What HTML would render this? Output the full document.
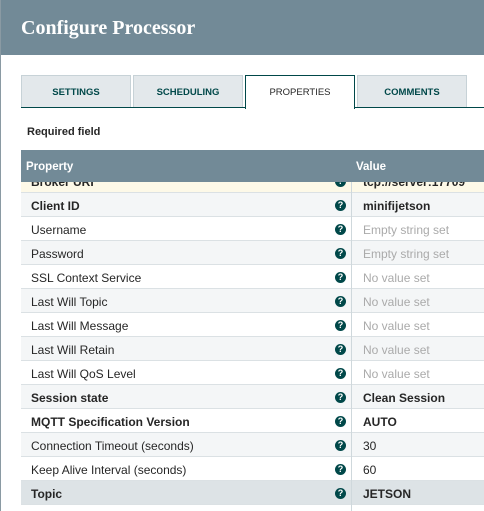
<!DOCTYPE html><html><head><style>
body{margin:0;width:484px;height:511px;overflow:hidden;background:#fff;font-family:"Liberation Sans",sans-serif;position:relative}
.edge{position:absolute;left:0;top:0;width:1px;height:511px;background:#8a9aa3}
.hdr{position:absolute;left:1px;top:0;right:0;height:55px;background:#728a97;color:#fff;font-family:"Liberation Serif",serif;font-weight:bold;font-size:20px;line-height:56px;padding-left:20px}
.tab{position:absolute;top:75px;width:108px;height:31px;background:#e3e8eb;border:1px solid #c7d2d7;border-bottom:none;color:#004849;font-size:9.5px;font-weight:bold;text-align:center;line-height:34px}
.tab.a{background:#fff;border:1px solid #004849;border-bottom:none;color:#262626;height:33px;font-weight:normal;z-index:2}
.line{position:absolute;left:21px;right:0;top:107px;height:1px;background:#004849}
.req{position:absolute;left:27px;top:126px;font-size:11px;font-weight:bold;color:#262626}
.th{position:absolute;left:21px;right:0;top:150px;height:32px;background:#728a97;color:#fff;font-size:11.5px;font-weight:bold;z-index:3}
.th span{position:absolute;top:11px}
.row{position:absolute;left:21px;right:0;height:23px;border-bottom:1px solid #dbe1e4;font-size:12px;color:#262626}
.row .p{position:absolute;left:10px;top:6px}
.row .v{position:absolute;left:342px;top:6px}
.row .d{position:absolute;left:330px;top:0;width:1px;height:24px;background:#cfd8dc}
.row .i{position:absolute;left:314px;top:7px;width:11px;height:11px;border-radius:50%;background:#004849;color:#fff;font-size:9px;font-weight:bold;line-height:11px;text-align:center}
.g{background:#f4f6f7}.b{font-weight:bold}.e .v{color:#aaa}
</style></head><body>
<div class="edge"></div>
<div class="hdr">Configure Processor</div>
<div class="tab" style="left:21px">SETTINGS</div>
<div class="tab" style="left:133px">SCHEDULING</div>
<div class="tab a" style="left:245px">PROPERTIES</div>
<div class="tab" style="left:357px">COMMENTS</div>
<div class="line"></div>
<div class="req">Required field</div>
<div class="th"><span style="left:5px">Property</span><span style="left:335px">Value</span></div>
<div class="row b" style="top:169px;background:#fdf9e8"><span class="p">Broker URI</span><span class="i">?</span><span class="d"></span><span class="v">tcp://server:17709</span></div>
<div class="row g b" style="top:193px"><span class="p">Client ID</span><span class="i">?</span><span class="d"></span><span class="v">minifijetson</span></div>
<div class="row e" style="top:217px"><span class="p">Username</span><span class="i">?</span><span class="d"></span><span class="v">Empty string set</span></div>
<div class="row g e" style="top:241px"><span class="p">Password</span><span class="i">?</span><span class="d"></span><span class="v">Empty string set</span></div>
<div class="row e" style="top:265px"><span class="p">SSL Context Service</span><span class="i">?</span><span class="d"></span><span class="v">No value set</span></div>
<div class="row g e" style="top:289px"><span class="p">Last Will Topic</span><span class="i">?</span><span class="d"></span><span class="v">No value set</span></div>
<div class="row e" style="top:313px"><span class="p">Last Will Message</span><span class="i">?</span><span class="d"></span><span class="v">No value set</span></div>
<div class="row g e" style="top:337px"><span class="p">Last Will Retain</span><span class="i">?</span><span class="d"></span><span class="v">No value set</span></div>
<div class="row e" style="top:361px"><span class="p">Last Will QoS Level</span><span class="i">?</span><span class="d"></span><span class="v">No value set</span></div>
<div class="row g b" style="top:385px"><span class="p">Session state</span><span class="i">?</span><span class="d"></span><span class="v">Clean Session</span></div>
<div class="row b" style="top:409px"><span class="p">MQTT Specification Version</span><span class="i">?</span><span class="d"></span><span class="v">AUTO</span></div>
<div class="row g" style="top:433px"><span class="p">Connection Timeout (seconds)</span><span class="i">?</span><span class="d"></span><span class="v">30</span></div>
<div class="row" style="top:457px"><span class="p">Keep Alive Interval (seconds)</span><span class="i">?</span><span class="d"></span><span class="v">60</span></div>
<div class="row b" style="top:481px;background:#dde3e6"><span class="p">Topic</span><span class="i">?</span><span class="d"></span><span class="v">JETSON</span></div>
<div style="position:absolute;left:351px;top:505px;width:1px;height:6px;background:#cfd8dc"></div>
</body></html>
